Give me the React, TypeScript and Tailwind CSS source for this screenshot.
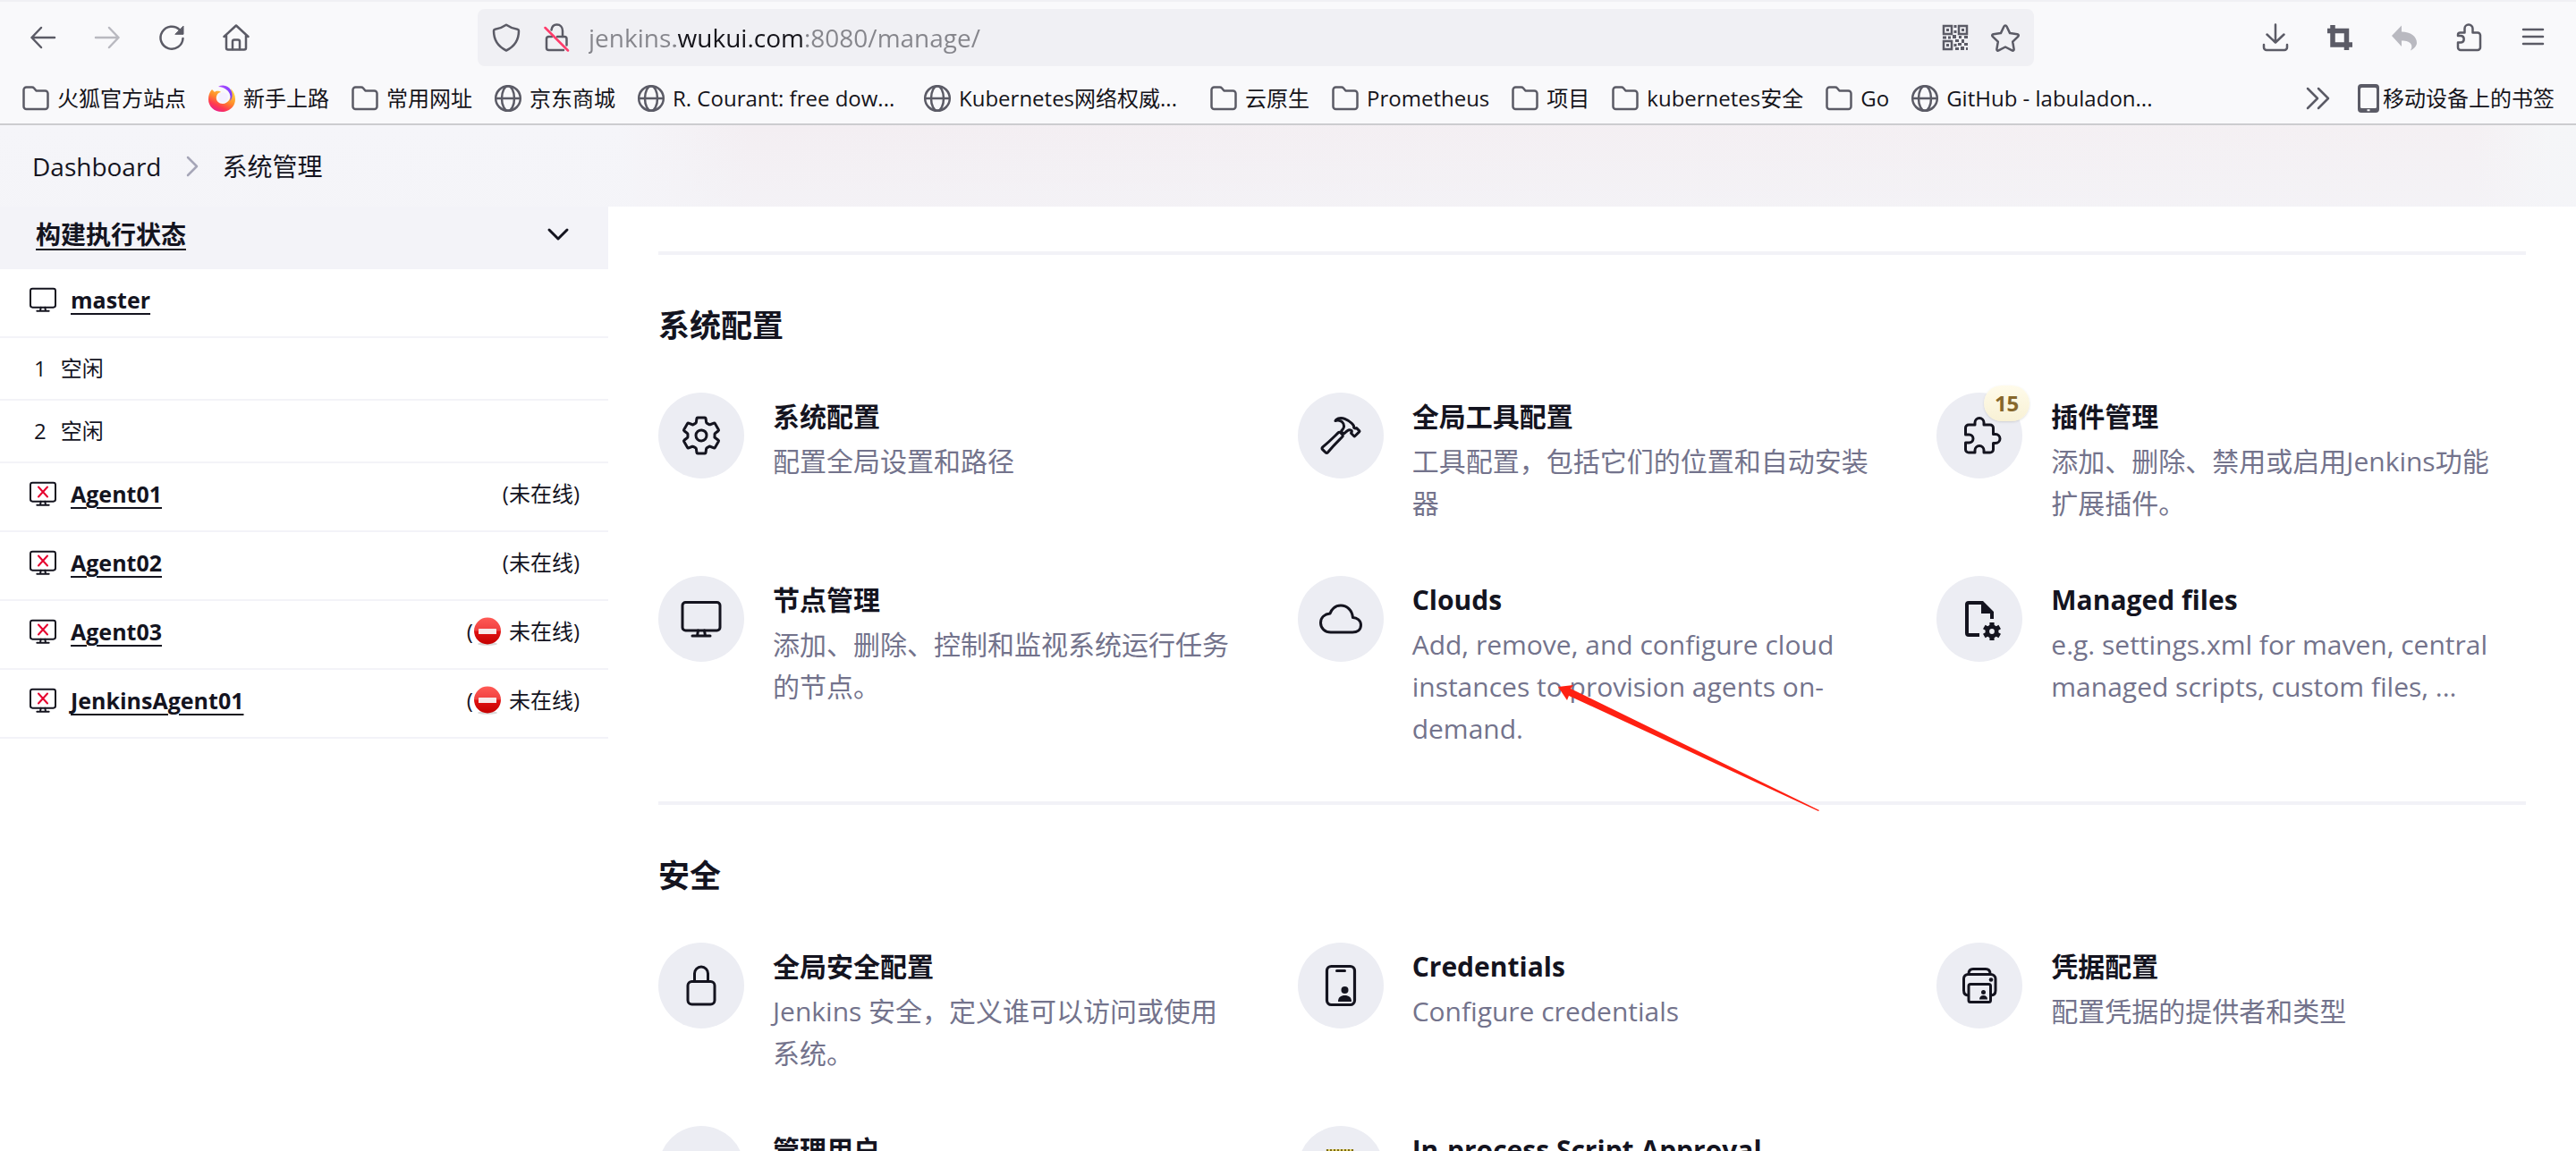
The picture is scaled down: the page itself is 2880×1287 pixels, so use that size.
import type { ReactNode } from "react";
import {
  IoCloudOutline,
  IoHammerOutline,
  IoLockClosedOutline,
  IoPeopleOutline,
  IoSettingsOutline,
} from "react-icons/io5";

/* ---------- browser toolbar icons ---------- */

function Glyph({ children, className = "size-8" }: { children: ReactNode; className?: string }) {
  return (
    <svg
      viewBox="0 0 32 32"
      className={`${className} shrink-0`}
      fill="none"
      stroke="currentColor"
      strokeWidth="2.5"
      strokeLinecap="round"
      strokeLinejoin="round"
      aria-hidden="true"
    >
      {children}
    </svg>
  );
}

const BackIcon = () => (
  <Glyph>
    <path d="M29 16H3.5M14 5 3.5 16 14 27" />
  </Glyph>
);
const ForwardIcon = () => (
  <Glyph>
    <path d="M3 16h25.500M18 5l10.500 11L18 27" />
  </Glyph>
);
const ReloadIcon = () => (
  <Glyph>
    <path d="M25 7.500A12.500 12.500 0 1 0 28.500 17" />
    <path d="M29 3.500v8.800h-8.800z" fill="currentColor" strokeWidth="1" />
  </Glyph>
);
const HomeIcon = () => (
  <Glyph>
    <path d="M2.500 15 16 2.500 29.500 15M5 13v14.500a2 2 0 0 0 2 2h18a2 2 0 0 0 2-2V13" />
    <path d="M12 29v-8.500a2 2 0 0 1 2-2h4a2 2 0 0 1 2 2V29" />
  </Glyph>
);
const ShieldIcon = () => (
  <Glyph>
    <path d="M16 1.800c4 2.800 8.500 4.400 12.500 5 1 .2 1.500.8 1.500 1.800C30 19 25.500 26 16 30.500 6.500 26 2 19 2 8.600c0-1 .5-1.600 1.500-1.800 4-.6 8.500-2.200 12.500-5z" />
  </Glyph>
);
const InsecureIcon = () => (
  <Glyph>
    <path d="M10.500 7.500C11 4 13 1.500 16.500 1.500c4 0 6.500 3 6.500 7V15" />
    <path d="M17 15h8a2.500 2.500 0 0 1 2.500 2.500v7M24 30H7.500A2.500 2.500 0 0 1 5 27.500v-10A2.500 2.500 0 0 1 7 15h4" />
    <path d="M3.500 5 29 30.500" stroke="#ff3b6b" />
  </Glyph>
);
const StarIcon = () => (
  <Glyph>
    <path d="M16 2.500c.7 0 1.200.4 1.500 1l3.600 7.600 8.200 1.200c1.500.2 1.900 1.500.9 2.500l-6 5.900 1.400 8.200c.2 1.300-1 2.100-2.100 1.500L16 26.500l-7.500 3.900c-1.100.6-2.300-.2-2.100-1.500l1.400-8.200-6-5.900c-1-1-.6-2.300.9-2.500l8.200-1.200 3.600-7.600c.3-.6.800-1 1.500-1z" />
  </Glyph>
);
const QrIcon = () => (
  <Glyph>
    <g strokeLinejoin="miter" strokeLinecap="butt" strokeWidth="2.500">
      <path d="M3 3h9v9H3zM20 3h9v9h-9zM3 20h9v9H3z" />
    </g>
    <g fill="currentColor" stroke="none">
      <path d="M6 6h3v3H6zM23 6h3v3h-3zM6 23h3v3H6zM14.500 2h3v3h-3zM14.500 8h3v3h-3zM2 14.500h4v3H2zM8 14.500h3v3H8zM13 13h4v4h-4zM20 14h3v3h-3zM26 14h4v3h-4zM16 18h4v3h-4zM23 18h3v4h-3zM14.500 23h3v3h-3zM19 22h4v3h-4zM26 22h4v3h-4zM22 26h4v4h-4zM16 27h4v3h-4zM28 27h2v3h-2z" />
    </g>
  </Glyph>
);
const DownloadIcon = () => (
  <Glyph>
    <path d="M16 1.500V21M6.500 12.500 16 21.500l9.500-9M3 24v3a3 3 0 0 0 3 3h20a3 3 0 0 0 3-3v-3" />
  </Glyph>
);
const CropIcon = () => (
  <Glyph>
    <path d="M8 2v22h22M2 8.500h21.500V30" strokeWidth="5.500" strokeLinecap="butt" strokeLinejoin="miter" />
  </Glyph>
);
const UndoIcon = () => (
  <Glyph>
    <path
      d="M13 2.500v7c10 0 17 5 17 12.500 0 3-3 6.500-7 8.500 3-5 1.500-11-10-11v6.500L2 14z"
      fill="currentColor"
      stroke="none"
    />
  </Glyph>
);
const ToolbarPuzzleIcon = () => (
  <Glyph>
    <path d="M11.500 10.500V6a4.500 4.500 0 0 1 9 0v4.500H26a3 3 0 0 1 3 3V27a3 3 0 0 1-3 3H7a3 3 0 0 1-3-3v-5.500h3.500a3.800 3.800 0 0 0 0-7.500H4v-1a2.500 2.500 0 0 1 2.500-2.500z" />
  </Glyph>
);
const MenuIcon = () => (
  <Glyph>
    <path d="M5 7h22M5 15h22M5 23h22" />
  </Glyph>
);
const FolderIcon = () => (
  <Glyph>
    <path d="M2.500 6.500a3 3 0 0 1 3-3h6.200a3 3 0 0 1 2.300 1l2.500 3h10a3 3 0 0 1 3 3v14.500a3 3 0 0 1-3 3h-21a3 3 0 0 1-3-3z" />
  </Glyph>
);
const GlobeIcon = () => (
  <Glyph>
    <circle cx="16" cy="16" r="13.800" />
    <ellipse cx="16" cy="16" rx="7" ry="13.800" />
    <path d="M2.500 16h27" />
  </Glyph>
);
const FirefoxIcon = () => (
  <svg viewBox="0 0 32 32" className="size-8 shrink-0" aria-hidden="true">
    <defs>
      <linearGradient id="ffBody" x1="0.8" y1="0.1" x2="0.3" y2="1">
        <stop offset="0" stopColor="#ffd43a" />
        <stop offset="0.45" stopColor="#ff8a2b" />
        <stop offset="0.75" stopColor="#ff3b4f" />
        <stop offset="1" stopColor="#e91e8c" />
      </linearGradient>
      <linearGradient id="ffTail" x1="0" y1="0" x2="1" y2="1">
        <stop offset="0" stopColor="#b14bff" />
        <stop offset="1" stopColor="#6a3cff" />
      </linearGradient>
    </defs>
    <path
      d="M5 6C2 9 1 13 1 17c0 8 6.500 14 15 14s15-6 15-14c0-5-2-9-5-12 1 4 1 8-1 11-1 3-4 6-8 6-5 0-8-4-7-8 .6-3 2.500-4.500 5-5C12 7 9 8 8 9 7 8 6 7 5 6z"
      fill="url(#ffBody)"
    />
    <path
      d="M12 3c5-3 11-1 14 3.500 2.500 4 2 9-.8 12.500 1-5 .2-9-3.200-12C19 4.200 16 3 12 3z"
      fill="url(#ffTail)"
    />
    <circle cx="17.500" cy="15" r="5.500" fill="#f4f0ff" />
  </svg>
);
const PhoneIcon = () => (
  <svg viewBox="0 0 24 32" className="h-8 w-6 shrink-0" aria-hidden="true">
    <path
      fillRule="evenodd"
      fill="currentColor"
      d="M4 0h16a4 4 0 0 1 4 4v24a4 4 0 0 1-4 4H4a4 4 0 0 1-4-4V4a4 4 0 0 1 4-4zM4.500 4a1.500 1.500 0 0 0-1.500 1.500v20A1.500 1.500 0 0 0 4.500 27h15a1.500 1.500 0 0 0 1.500-1.500v-20A1.500 1.500 0 0 0 19.500 4zM10.500 28.300v2h3v-2z"
    />
  </svg>
);

/* ---------- page icons ---------- */

function MonitorIcon({ className = "size-12" }: { className?: string }) {
  return (
    <svg
      viewBox="0 0 48 48"
      className={className}
      fill="none"
      stroke="currentColor"
      strokeWidth="3"
      strokeLinecap="round"
      strokeLinejoin="round"
      aria-hidden="true"
    >
      <rect x="3" y="5.500" width="42" height="31.500" rx="3.500" />
      <path d="M20.500 37 19.500 43M27.500 37l1 6M14 43h20" />
    </svg>
  );
}
const PluginIcon = () => (
  <svg
    viewBox="0 0 48 48"
    className="size-12 overflow-visible"
    fill="none"
    stroke="currentColor"
    strokeWidth="3"
    strokeLinejoin="round"
    aria-hidden="true"
  >
    <path d="M8.500 23v-7.500A3.500 3.500 0 0 1 12 12h7V9.500a5 5 0 0 1 10 0V12h7a3.500 3.500 0 0 1 3.500 3.500v7H42a5 5 0 0 1 0 10h-2.500v7A3.500 3.500 0 0 1 36 43h-7v-2.500a5 5 0 0 0-10 0V43h-7a3.500 3.500 0 0 1-3.500-3.500V32h4a4.500 4.500 0 0 0 0-9z" />
  </svg>
);
const FileCogIcon = () => (
  <svg viewBox="0 0 48 48" className="size-12 overflow-visible" fill="currentColor" aria-hidden="true">
    <path d="M12 4h16l12 12v8h-4v-6H26V8H12v32h12v4H12a4 4 0 0 1-4-4V8a4 4 0 0 1 4-4z" />
    <circle cx="38" cy="38" r="5.200" fill="none" stroke="currentColor" strokeWidth="4.600" />
    <g stroke="currentColor" strokeWidth="5.200">
      <path d="M38 28v4M38 44v4M29.300 33l3.500 2M43.200 41l3.500 2M29.300 43l3.500-2M43.200 35l3.500-2" />
    </g>
  </svg>
);
const CredentialsIcon = () => (
  <svg viewBox="0 0 48 48" className="size-12" fill="currentColor" aria-hidden="true">
    <rect x="8.500" y="2.500" width="31" height="43" rx="5" fill="none" stroke="currentColor" strokeWidth="3.200" />
    <rect x="18" y="6" width="12" height="3" rx="1.500" />
    <circle cx="28.500" cy="29" r="4" />
    <path d="M21 42c0-5 3-7 7.500-7s7.500 2 7.500 7z" />
  </svg>
);
const ProviderIcon = () => (
  <svg
    viewBox="0 0 48 48"
    className="size-12"
    fill="none"
    stroke="currentColor"
    strokeWidth="3"
    strokeLinejoin="round"
    aria-hidden="true"
  >
    <path d="M12 11c0-3.500 1.500-5.500 5-5.500h14c3.500 0 5 2 5 5.500" />
    <path d="M12 35c-3.500 0-5.500-2-5.500-5.500V16.500c0-3 2-5 5-5h25c3 0 5.500 2 5.500 5v13c0 3.500-2 5.500-5.500 5.500" />
    <rect x="12" y="22.500" width="24.500" height="20" rx="2" />
    <g fill="currentColor" stroke="none">
      <circle cx="37" cy="17.500" r="2.300" />
      <circle cx="28.500" cy="31.500" r="2.500" />
      <path d="M24 39.500c0-3 1.800-4.500 4.500-4.500s4.500 1.500 4.500 4.500z" />
    </g>
  </svg>
);
const NotepadIcon = () => (
  <svg viewBox="0 0 48 48" className="size-12" aria-hidden="true">
    <rect x="8" y="5" width="32" height="40" rx="2" fill="#fdf3b5" stroke="#b8a23a" />
    <path d="M9 2v4M13 2v4M17 2v4M21 2v4M25 2v4M29 2v4M33 2v4M37 2v4" stroke="#7d6c14" strokeWidth="2.200" />
    <path d="M11 2v4M15 2v4M19 2v4M23 2v4M27 2v4M31 2v4M35 2v4" stroke="#e8d44d" strokeWidth="1.500" />
  </svg>
);
const NoEntryIcon = () => (
  <svg viewBox="0 0 32 32" className="size-8 shrink-0" aria-hidden="true">
    <defs>
      <linearGradient id="noEntry" x1="0" y1="0" x2="0" y2="1">
        <stop offset="0" stopColor="#ff5a55" />
        <stop offset="0.48" stopColor="#f04040" />
        <stop offset="0.52" stopColor="#e01212" />
        <stop offset="1" stopColor="#c40000" />
      </linearGradient>
    </defs>
    <ellipse cx="16" cy="30" rx="11" ry="1.800" fill="#d9d9d9" />
    <circle cx="16" cy="15.500" r="15" fill="url(#noEntry)" />
    <rect x="6" y="13" width="20" height="6" rx="0.500" fill="#f7e9e9" />
  </svg>
);

/* ---------- browser chrome ---------- */

type Bookmark = { label: string; kind: "folder" | "globe" | "firefox"; long?: boolean };

const bookmarks: Bookmark[] = [
  { label: "火狐官方站点", kind: "folder" },
  { label: "新手上路", kind: "firefox" },
  { label: "常用网址", kind: "folder" },
  { label: "京东商城", kind: "globe" },
  { label: "R. Courant: free dow...", kind: "globe", long: true },
  { label: "Kubernetes网络权威...", kind: "globe", long: true },
  { label: "云原生", kind: "folder" },
  { label: "Prometheus", kind: "folder" },
  { label: "项目", kind: "folder" },
  { label: "kubernetes安全", kind: "folder" },
  { label: "Go", kind: "folder" },
  { label: "GitHub - labuladon...", kind: "globe", long: true },
];

function ToolButton({ label, dim, children }: { label: string; dim?: boolean; children: ReactNode }) {
  return (
    <button
      type="button"
      aria-label={label}
      className={`flex h-16 w-18 items-center justify-center ${dim ? "text-[#b9b9c0]" : "text-[#5b5b66]"}`}
    >
      {children}
    </button>
  );
}

function BrowserChrome() {
  return (
    <div className="shrink-0 border-t-2 border-b-2 border-t-[#f0f0f4] border-b-[#cccccf] bg-[#f9f9fb]">
      <div className="flex items-center px-3 pt-2">
        <div className="flex">
          <ToolButton label="后退"><BackIcon /></ToolButton>
          <ToolButton label="前进" dim><ForwardIcon /></ToolButton>
          <ToolButton label="刷新"><ReloadIcon /></ToolButton>
          <ToolButton label="主页"><HomeIcon /></ToolButton>
        </div>
        <div className="mx-[234px] flex h-16 flex-1 items-center rounded-lg bg-[#f0f0f4] px-4 text-[#5b5b66]">
          <ShieldIcon />
          <span className="ml-6 flex"><InsecureIcon /></span>
          <input
            type="text"
            aria-label="地址栏"
            defaultValue="jenkins.wukui.com:8080/manage/"
            className="ml-5 min-w-0 flex-1 bg-[linear-gradient(90deg,#85858b_0_97px,#15141a_97px_240px,#85858b_240px)] bg-clip-text text-[28px] leading-10 text-transparent outline-none"
          />
          <button type="button" aria-label="二维码" className="flex"><QrIcon /></button>
          <button type="button" aria-label="添加书签" className="ml-6 flex"><StarIcon /></button>
        </div>
        <div className="flex">
          <ToolButton label="下载"><DownloadIcon /></ToolButton>
          <ToolButton label="截图"><CropIcon /></ToolButton>
          <ToolButton label="撤销" dim><UndoIcon /></ToolButton>
          <ToolButton label="扩展"><ToolbarPuzzleIcon /></ToolButton>
          <ToolButton label="菜单"><MenuIcon /></ToolButton>
        </div>
      </div>
      <nav className="flex h-16 items-center justify-between px-6 pt-2 text-2xl whitespace-nowrap text-[#15141a]">
        <div className="flex gap-6">
          {bookmarks.map((b) => (
            <a key={b.label} href="#" className="flex items-center gap-2">
              <span className="text-[#5b5b66]">
                {b.kind === "folder" ? <FolderIcon /> : b.kind === "globe" ? <GlobeIcon /> : <FirefoxIcon />}
              </span>
              <span className={b.long ? "w-64" : ""}>{b.label}</span>
            </a>
          ))}
        </div>
        <div className="flex items-center gap-7">
          <button type="button" aria-label="更多书签" className="flex text-[#5b5b66]">
            <Glyph>
              <path d="M4 5l11 11L4 27M16 5l11 11-11 11" />
            </Glyph>
          </button>
          <a href="#" className="flex items-center gap-1">
            <span className="text-[#5b5b66]"><PhoneIcon /></span>
            移动设备上的书签
          </a>
        </div>
      </nav>
    </div>
  );
}

/* ---------- Jenkins page ---------- */

function Breadcrumbs() {
  return (
    <nav
      aria-label="breadcrumb"
      className="h-[91px] shrink-0 bg-[linear-gradient(90deg,#f5f5f9_0%,#f5f5f9_24%,#f3eef2_29%,#f4f0f3_96%,#f5f6f8_99%)]"
    >
      <ol className="flex h-full items-center gap-[18px] bg-linear-to-b from-transparent to-[#f4f4f8]/60 px-9 text-[28px] text-[#14141f]">
        <li><a href="#">Dashboard</a></li>
        <li aria-hidden="true" className="text-[#a6a6b8]">
          <Glyph>
            <path d="M11 6l10 10-10 10" />
          </Glyph>
        </li>
        <li><a href="#">系统管理</a></li>
      </ol>
    </nav>
  );
}

type Agent = { name: string; offline: boolean; blocked?: boolean };

const agents: Agent[] = [
  { name: "Agent01", offline: true },
  { name: "Agent02", offline: true },
  { name: "Agent03", offline: true, blocked: true },
  { name: "JenkinsAgent01", offline: true, blocked: true },
];

function AgentRow({ name, offline, blocked }: Agent) {
  return (
    <li className="flex items-center border-b-2 border-[#f3f3f8] pt-[18px] pr-8 pb-[25px] pl-8 leading-8">
      <span className="relative flex">
        <MonitorIcon className="size-8" />
        {offline && (
          <svg viewBox="0 0 32 32" className="absolute inset-0 size-8" aria-hidden="true">
            <path d="M11 8.500l10 11M21 8.500l-10 11" stroke="#e6002e" strokeWidth="2" strokeLinecap="round" />
          </svg>
        )}
      </span>
      <a href="#" className="ml-[15px] text-[25px] font-bold underline decoration-2 underline-offset-[5px]">
        {name}
      </a>
      {offline && (
        <span className="ml-auto flex items-center">
          (
          {blocked && <span className="mr-2 flex"><NoEntryIcon /></span>}
          未在线)
        </span>
      )}
    </li>
  );
}

function Sidebar() {
  return (
    <aside className="w-[680px] shrink-0 text-2xl text-[#14141f]">
      <div className="flex h-[70px] items-center justify-between bg-[#f3f3f8] pr-10 pb-2 pl-10">
        <a href="#" className="text-[28px] leading-10 font-bold underline decoration-2 underline-offset-[5px]">
          构建执行状态
        </a>
        <button type="button" aria-label="折叠" className="flex">
          <Glyph>
            <path d="M6 11l10 10 10-10" strokeWidth="3" />
          </Glyph>
        </button>
      </div>
      <ul>
        <AgentRow name="master" offline={false} />
        {[1, 2].map((n) => (
          <li key={n} className="flex gap-4 border-b-2 border-[#f3f3f8] py-[18px] pl-[38px] leading-8">
            <span>{n}</span>
            <span>空闲</span>
          </li>
        ))}
        {agents.map((a) => (
          <AgentRow key={a.name} {...a} />
        ))}
      </ul>
    </aside>
  );
}

type Card = { title: string; text?: string; icon: ReactNode; badge?: number; pointer?: boolean };

const sections: { title: string; cards: Card[] }[] = [
  {
    title: "系统配置",
    cards: [
      { title: "系统配置", text: "配置全局设置和路径", icon: <IoSettingsOutline /> },
      { title: "全局工具配置", text: "工具配置，包括它们的位置和自动安装器", icon: <IoHammerOutline /> },
      { title: "插件管理", text: "添加、删除、禁用或启用Jenkins功能扩展插件。", icon: <PluginIcon />, badge: 15 },
      { title: "节点管理", text: "添加、删除、控制和监视系统运行任务的节点。", icon: <MonitorIcon /> },
      {
        title: "Clouds",
        text: "Add, remove, and configure cloud instances to provision agents on-demand.",
        icon: <IoCloudOutline />,
        pointer: true,
      },
      {
        title: "Managed files",
        text: "e.g. settings.xml for maven, central managed scripts, custom files, ...",
        icon: <FileCogIcon />,
      },
    ],
  },
  {
    title: "安全",
    cards: [
      { title: "全局安全配置", text: "Jenkins 安全，定义谁可以访问或使用系统。", icon: <IoLockClosedOutline /> },
      { title: "Credentials", text: "Configure credentials", icon: <CredentialsIcon /> },
      { title: "凭据配置", text: "配置凭据的提供者和类型", icon: <ProviderIcon /> },
      { title: "管理用户", icon: <IoPeopleOutline /> },
      { title: "In-process Script Approval", icon: <NotepadIcon /> },
    ],
  },
];

function ManageCard({ title, text, icon, badge, pointer }: Card) {
  return (
    <a href="#" className="relative flex gap-8 pr-4">
      <span className="relative flex size-24 shrink-0 items-center justify-center rounded-full bg-[#ecedf3] text-5xl text-[#14141f]">
        {icon}
        {badge !== undefined && (
          <span className="absolute -top-2 -right-2 flex h-10 items-center rounded-full bg-linear-to-b from-[#fffbea] to-[#f8f1d5] px-3 text-2xl font-bold text-[#86672b] shadow">
            {badge}
          </span>
        )}
      </span>
      <span className="flex flex-col gap-0.5 pt-[3px] pb-0.5 text-[30px]">
        <span className="leading-[48px] font-bold text-[#14141f]">{title}</span>
        {text && <span className="leading-[47px] text-[#73738c]">{text}</span>}
      </span>
      {pointer && (
        <svg
          viewBox="0 0 292 142"
          className="pointer-events-none absolute top-[121px] left-[291px] z-10 h-[142px] w-[292px]"
          aria-hidden="true"
        >
          <path d="M0 3 17 1 14 5 292 141 291 142 12 13 10 18z" fill="#ff2012" />
        </svg>
      )}
    </a>
  );
}

export default function App() {
  return (
    <div className="flex h-screen flex-col overflow-hidden bg-white font-['Open_Sans','Noto_Sans_CJK_SC',sans-serif]">
      <BrowserChrome />
      <Breadcrumbs />
      <div className="flex min-h-0 flex-1">
        <Sidebar />
        <main className="min-w-0 flex-1 overflow-hidden px-14 pt-[50px]">
          {sections.map((s) => (
            <section key={s.title} className="border-t-4 border-[#f2f2f7] pt-14 pb-14">
              <h2 className="text-[35px] leading-[46px] font-bold text-[#14141f]">{s.title}</h2>
              <div className="mt-[52px] grid grid-cols-3 gap-14">
                {s.cards.map((c) => (
                  <ManageCard key={c.title} {...c} />
                ))}
              </div>
            </section>
          ))}
        </main>
      </div>
    </div>
  );
}
